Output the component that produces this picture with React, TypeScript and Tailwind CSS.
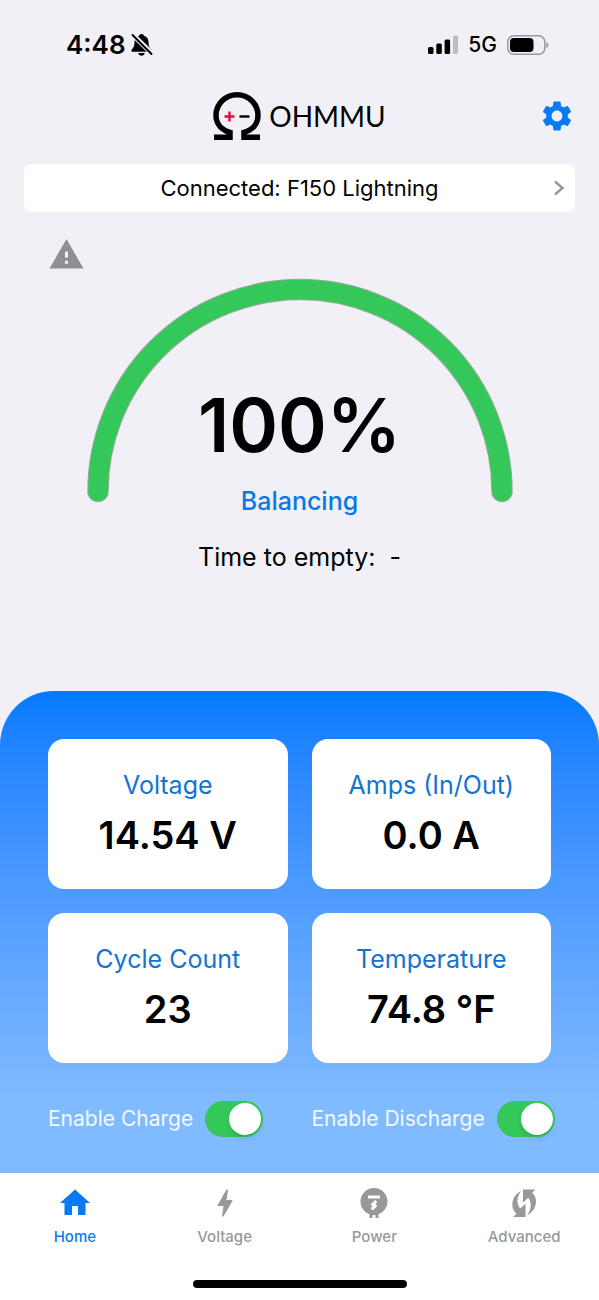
import React, { useState } from 'react';
import { MdBolt, MdElectricMeter, MdHome, MdSettings, MdWarning } from 'react-icons/md';

const BellOffIcon = () => (
  <svg width="24" height="24" viewBox="0 0 24 24" aria-hidden="true">
    <path
      fill="#000"
      d="M11.500 1c1.300 0 2.200.8 2.400 1.800 3 .9 4.600 3.300 4.600 6.300 0 4 .9 5.700 2.700 7.400.9.900.4 2.300-.8 2.300H2.600c-1.200 0-1.700-1.400-.8-2.300 1.800-1.700 2.700-3.400 2.700-7.400 0-3 1.600-5.400 4.600-6.300C9.300 1.800 10.200 1 11.500 1zM8.300 20h6.400c-.3 1.700-1.600 2.800-3.200 2.800S8.600 21.700 8.300 20z"
    />
    <path d="M2 1l21 20.500" stroke="#f1f0f6" strokeWidth="5" />
    <path d="M2.500 2l19 19" stroke="#000" strokeWidth="1.900" strokeLinecap="round" />
  </svg>
);

const SignalIcon = () => (
  <svg width="31" height="20" viewBox="0 0 31 20" aria-hidden="true">
    <rect x="1" y="12" width="5.500" height="7" rx="1.500" />
    <rect x="9.300" y="8.500" width="5.500" height="10.500" rx="1.500" />
    <rect x="17.600" y="4.500" width="5.500" height="14.500" rx="1.500" />
    <rect x="26" y="0.500" width="5" height="18.500" rx="1.500" fill="#bdbdc2" />
  </svg>
);

const BatteryIcon = () => (
  <svg width="42" height="20" viewBox="0 0 42 20" aria-hidden="true">
    <rect x="0.800" y="0.800" width="37" height="18.400" rx="6" fill="none" stroke="#98989d" strokeWidth="1.500" />
    <rect x="3" y="3" width="23.500" height="14" rx="4" />
    <path d="M39.300 7v6c1.200-.5 2-1.600 2-3s-.8-2.500-2-3z" fill="#98989d" />
  </svg>
);

const OmegaLogo = () => (
  <svg width="48" height="48" viewBox="0 0 48 48" aria-hidden="true">
    <path
      d="M1 45.300H17V40.300C8.500 38 3 31.800 3 23.300a21 20.500 0 0 1 42 0C45 31.800 39.500 38 31 40.300V45.300H47"
      fill="none"
      stroke="#000"
      strokeWidth="5.500"
    />
    <path d="M11.500 24.500h10M16.500 19.500v10" stroke="#df1239" strokeWidth="2.400" />
    <path d="M26.500 24.500h10" stroke="#000" strokeWidth="2.400" />
  </svg>
);

const CycleIcon = () => (
  <svg width="36" height="36" viewBox="0 0 36 36" fill="currentColor" aria-hidden="true">
    <path d="M17 4.500h12.500l-3.500 3.300c2.600 2.200 4 5.200 4 8.700 0 6-3.700 11.200-9 13.700 3.200-4.300 4.600-8.800 3.400-13.200-.4-1.600-1.200-3-2.300-4.300L17 17.800z" />
    <path d="M19.500 32H7l3.500-3.300c-2.700-2.300-4.200-5.500-4.200-9C6.300 13.500 10 8.500 15 6c-3 4.300-4.300 8.800-3.100 13.200.4 1.600 1.200 3 2.300 4.300l5.300-5z" />
  </svg>
);

const stats = [
  { label: 'Voltage', value: '14.54 V' },
  { label: 'Amps (In/Out)', value: '0.0 A' },
  { label: 'Cycle Count', value: '23' },
  { label: 'Temperature', value: '74.8 °F' },
];

const tabs = [
  { label: 'Home', icon: <MdHome size={36} />, active: true },
  { label: 'Voltage', icon: <MdBolt size={36} />, active: false },
  { label: 'Power', icon: <MdElectricMeter size={36} />, active: false },
  { label: 'Advanced', icon: <CycleIcon />, active: false },
];

interface ToggleProps {
  id: string;
  label: string;
}

const Toggle: React.FC<ToggleProps> = ({ id, label }) => {
  const [on, setOn] = useState(true);

  return (
    <div className="flex items-center gap-3">
      <label htmlFor={id} className="whitespace-nowrap text-[21px] leading-8 text-white/90">
        {label}
      </label>
      <input
        id={id}
        type="checkbox"
        role="switch"
        checked={on}
        onChange={() => setOn(!on)}
        className="flex h-9 w-[58px] shrink-0 cursor-pointer appearance-none items-center rounded-full bg-gray-300 p-0.5 before:size-8 before:rounded-full before:bg-white before:shadow-md checked:justify-end checked:bg-[#34c759]"
      />
    </div>
  );
};

const App: React.FC = () => {
  return (
    <div className="flex min-h-screen flex-col bg-[#f1f0f6] font-['Inter',sans-serif] text-black">
      {/* Status bar */}
      <div className="flex items-center justify-between pt-[29px] pr-[50px] pl-[66px]">
        <div className="flex items-center gap-1">
          <span className="text-[26px] leading-8 font-semibold">4:48</span>
          <BellOffIcon />
        </div>
        <div className="flex items-center gap-2.5">
          <SignalIcon />
          <span className="text-[21px] leading-8 font-medium">5G</span>
          <BatteryIcon />
        </div>
      </div>

      {/* Header */}
      <header className="grid grid-cols-[1fr_auto_1fr] items-center px-6 pt-[31px]">
        <span />
        <div className="flex items-center gap-2">
          <OmegaLogo />
          <span className="font-['Lato',sans-serif] text-[28px] leading-8">OHMMU</span>
        </div>
        <button aria-label="Settings" className="cursor-pointer justify-self-end text-[#087bf3]">
          <MdSettings size={36} />
        </button>
      </header>

      <div className="px-6 pt-6">
        <button className="grid h-12 w-full cursor-pointer grid-cols-[24px_1fr_24px] items-center rounded-lg bg-white px-1">
          <span />
          <span className="text-[22px] leading-8">Connected: F150 Lightning</span>
          <svg width="12" height="18" viewBox="0 0 12 18" aria-hidden="true" className="justify-self-center">
            <path d="M2 2.500l7.500 6.500L2 15.500" fill="none" stroke="#98989d" strokeWidth="2.500" />
          </svg>
        </button>
      </div>

      <div className="px-12 pt-6 text-[#8e8e93]">
        <MdWarning size={37} aria-label="Warning" />
      </div>

      {/* State of charge */}
      <section className="grid justify-items-center pt-1">
        <svg width="428" height="226" viewBox="0 0 428 226" aria-hidden="true" className="col-start-1 row-start-1">
          <path
            d="M12 214.500a202 202 0 0 1 404 0"
            fill="none"
            stroke="#a0a8a0"
            strokeWidth="21.500"
            strokeLinecap="round"
          />
          <path
            d="M12 214.500a202 202 0 0 1 404 0"
            fill="none"
            stroke="#34c759"
            strokeWidth="19.500"
            strokeLinecap="round"
          />
        </svg>
        <div className="col-start-1 row-start-1 flex flex-col items-center pt-[110px]">
          <h1 className="text-[74px] leading-[76px] font-semibold">100%</h1>
          <p className="pt-[22px] text-[25px] leading-8 font-medium text-[#0a78e6]">Balancing</p>
          <p className="pt-6 text-[25px] leading-8 whitespace-pre">Time to empty:  -</p>
        </div>
      </section>

      <main className="mt-auto rounded-t-[54px] bg-linear-to-b from-[#007aff] to-[#80baff] to-85% px-12 pt-12 pb-9">
        <div className="grid grid-cols-2 gap-6">
          {stats.map((stat) => (
            <div key={stat.label} className="flex h-[150px] flex-col items-center rounded-2xl bg-white pt-7">
              <h2 className="text-[25px] leading-9 text-[#1273d4]">{stat.label}</h2>
              <p className="pt-2 text-[38px] leading-12 font-semibold">{stat.value}</p>
            </div>
          ))}
        </div>
        <div className="grid grid-cols-2 gap-6 pt-[38px]">
          <Toggle id="enable-charge" label="Enable Charge" />
          <Toggle id="enable-discharge" label="Enable Discharge" />
        </div>
      </main>

      {/* Tab bar */}
      <footer className="bg-white py-3">
        <nav className="grid grid-cols-4">
          {tabs.map((tab) => (
            <a
              key={tab.label}
              href="#"
              aria-current={tab.active ? 'page' : undefined}
              className={`flex flex-col items-center gap-1 text-[15px] leading-6 font-medium ${
                tab.active ? 'text-[#087bf3]' : 'text-[#98989b]'
              }`}
            >
              {tab.icon}
              {tab.label}
            </a>
          ))}
        </nav>
        <div className="mx-auto mt-[31px] h-2 w-[214px] rounded-full bg-black" />
      </footer>
    </div>
  );
};

export default App;
